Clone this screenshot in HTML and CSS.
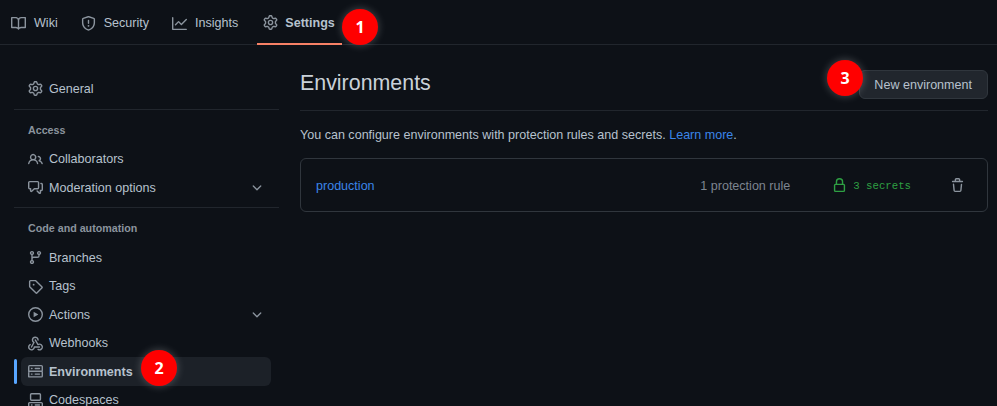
FILE: index.html
```html
<!DOCTYPE html>
<html lang="en">
<head>
<meta charset="utf-8">
<title>Environments</title>
<link rel="stylesheet" href="styles.css">
</head>
<body>
<svg class="defs" aria-hidden="true">
<symbol id="i-book" viewBox="0 0 16 16"><path d="M0 1.75A.75.75 0 0 1 .75 1h4.253c1.227 0 2.317.59 3 1.501A3.743 3.743 0 0 1 11.006 1h4.245a.75.75 0 0 1 .75.75v10.5a.75.75 0 0 1-.75.75h-4.507a2.25 2.25 0 0 0-1.591.659l-.622.621a.75.75 0 0 1-1.06 0l-.622-.621A2.25 2.25 0 0 0 5.258 13H.75a.75.75 0 0 1-.75-.75Zm7.251 10.324.004-5.073-.002-2.253A2.25 2.25 0 0 0 5.003 2.5H1.5v9h3.757a3.75 3.75 0 0 1 1.994.574ZM8.755 4.75l-.004 7.322a3.752 3.752 0 0 1 1.992-.572H14.5v-9h-3.495a2.25 2.25 0 0 0-2.25 2.25Z"/></symbol>
<symbol id="i-shield" viewBox="0 0 16 16"><path d="M7.467.133a1.748 1.748 0 0 1 1.066 0l5.25 1.68A1.75 1.75 0 0 1 15 3.48V7c0 1.566-.32 3.182-1.303 4.682-.983 1.498-2.585 2.813-5.032 3.855a1.697 1.697 0 0 1-1.33 0c-2.447-1.042-4.049-2.357-5.032-3.855C1.32 10.182 1 8.566 1 7V3.48a1.75 1.75 0 0 1 1.217-1.667Zm.61 1.429a.25.25 0 0 0-.153 0l-5.25 1.68a.25.25 0 0 0-.174.238V7c0 1.358.275 2.666 1.057 3.86.784 1.194 2.121 2.34 4.366 3.297a.196.196 0 0 0 .154 0c2.245-.956 3.582-2.104 4.366-3.298C13.225 9.666 13.5 8.36 13.5 7V3.48a.251.251 0 0 0-.174-.237l-5.25-1.68ZM8.75 4.75v3a.75.75 0 0 1-1.5 0v-3a.75.75 0 0 1 1.5 0ZM9 10.5a1 1 0 1 1-2 0 1 1 0 0 1 2 0Z"/></symbol>
<symbol id="i-graph" viewBox="0 0 16 16"><path d="M1.5 1.75V13.5h13.75a.75.75 0 0 1 0 1.5H.75a.75.75 0 0 1-.75-.75V1.75a.75.75 0 0 1 1.5 0Zm14.28 2.53-5.25 5.25a.75.75 0 0 1-1.06 0L7 7.06 4.28 9.78a.751.751 0 0 1-1.042-.018.751.751 0 0 1-.018-1.042l3.25-3.25a.75.75 0 0 1 1.06 0L10 7.94l4.72-4.72a.751.751 0 0 1 1.042.018.751.751 0 0 1 .018 1.042Z"/></symbol>
<symbol id="i-gear" viewBox="0 0 16 16"><path d="M8 0a8.2 8.2 0 0 1 .701.031C9.444.095 9.99.645 10.16 1.29l.288 1.107c.018.066.079.158.212.224.231.114.454.243.668.386.123.082.233.09.299.071l1.103-.303c.644-.176 1.392.021 1.82.63.27.385.506.792.704 1.218.315.675.111 1.422-.364 1.891l-.814.806c-.049.048-.098.147-.088.294.016.257.016.515 0 .772-.01.147.038.246.088.294l.814.806c.475.469.679 1.216.364 1.891a7.977 7.977 0 0 1-.704 1.217c-.428.61-1.176.807-1.82.63l-1.102-.302c-.067-.019-.177-.011-.3.071a5.909 5.909 0 0 1-.668.386c-.133.066-.194.158-.211.224l-.29 1.106c-.168.646-.715 1.196-1.458 1.26a8.006 8.006 0 0 1-1.402 0c-.743-.064-1.289-.614-1.458-1.26l-.289-1.106c-.018-.066-.079-.158-.212-.224a5.738 5.738 0 0 1-.668-.386c-.123-.082-.233-.09-.299-.071l-1.103.303c-.644.176-1.392-.021-1.82-.63a8.12 8.12 0 0 1-.704-1.218c-.315-.675-.111-1.422.363-1.891l.815-.806c.05-.048.098-.147.088-.294a6.214 6.214 0 0 1 0-.772c.01-.147-.038-.246-.088-.294l-.815-.806C.635 6.045.431 5.298.746 4.623a7.92 7.92 0 0 1 .704-1.217c.428-.61 1.176-.807 1.82-.63l1.102.302c.067.019.177.011.3-.071.214-.143.437-.272.668-.386.133-.066.194-.158.211-.224l.29-1.106C6.009.645 6.556.095 7.299.03 7.53.01 7.764 0 8 0Zm-.571 1.525c-.036.003-.108.036-.137.146l-.289 1.105c-.147.561-.549.967-.998 1.189-.173.086-.34.183-.5.29-.417.278-.97.423-1.529.27l-1.103-.303c-.109-.03-.175.016-.195.045-.22.312-.412.644-.573.99-.014.031-.021.11.059.19l.815.806c.411.406.562.957.53 1.456a4.709 4.709 0 0 0 0 .582c.032.499-.119 1.05-.53 1.456l-.815.806c-.081.08-.073.159-.059.19.162.346.353.677.573.989.02.03.085.076.195.046l1.102-.303c.56-.153 1.113-.008 1.53.27.161.107.328.204.501.29.447.222.85.629.997 1.189l.289 1.105c.029.109.101.143.137.146a6.6 6.6 0 0 0 1.142 0c.036-.003.108-.036.137-.146l.289-1.105c.147-.561.549-.967.998-1.189.173-.086.34-.183.5-.29.417-.278.97-.423 1.529-.27l1.103.303c.109.029.175-.016.195-.045.22-.313.411-.644.573-.99.014-.031.021-.11-.059-.19l-.815-.806c-.411-.406-.562-.957-.53-1.456a4.709 4.709 0 0 0 0-.582c-.032-.499.119-1.05.53-1.456l.815-.806c.081-.08.073-.159.059-.19a6.464 6.464 0 0 0-.573-.989c-.02-.03-.085-.076-.195-.046l-1.102.303c-.56.153-1.113.008-1.53-.27a4.44 4.44 0 0 0-.501-.29c-.447-.222-.85-.629-.997-1.189l-.289-1.105c-.029-.11-.101-.143-.137-.146a6.6 6.6 0 0 0-1.142 0ZM11 8a3 3 0 1 1-6 0 3 3 0 0 1 6 0ZM9.5 8a1.5 1.5 0 1 0-3.001.001A1.5 1.5 0 0 0 9.5 8Z"/></symbol>
<symbol id="i-people" viewBox="0 0 16 16"><path d="M2 5.5a3.5 3.5 0 1 1 5.898 2.549 5.508 5.508 0 0 1 3.034 4.084.75.75 0 1 1-1.482.235 4 4 0 0 0-7.9 0 .75.75 0 0 1-1.482-.236A5.507 5.507 0 0 1 3.102 8.05 3.493 3.493 0 0 1 2 5.5ZM11 4a3.001 3.001 0 0 1 2.22 5.018 5.01 5.01 0 0 1 2.56 3.012.749.749 0 0 1-.885.954.752.752 0 0 1-.549-.514 3.507 3.507 0 0 0-2.522-2.372.75.75 0 0 1-.574-.73v-.352a.75.75 0 0 1 .416-.672A1.5 1.5 0 0 0 11 5.5.75.75 0 0 1 11 4Zm-5.5-.5a2 2 0 1 0-.001 3.999A2 2 0 0 0 5.5 3.5Z"/></symbol>
<symbol id="i-discussion" viewBox="0 0 16 16"><path d="M1.75 1h8.5c.966 0 1.75.784 1.75 1.75v5.5A1.75 1.75 0 0 1 10.25 10H7.061l-2.574 2.573A1.458 1.458 0 0 1 2 11.543V10h-.25A1.75 1.75 0 0 1 0 8.25v-5.5C0 1.784.784 1 1.75 1ZM1.5 2.75v5.5c0 .138.112.25.25.25h1a.75.75 0 0 1 .75.75v2.19l2.72-2.72a.749.749 0 0 1 .53-.22h3.5a.25.25 0 0 0 .25-.25v-5.5a.25.25 0 0 0-.25-.25h-8.5a.25.25 0 0 0-.25.25Zm13 2a.25.25 0 0 0-.25-.25h-.5a.75.75 0 0 1 0-1.5h.5c.966 0 1.75.784 1.75 1.75v5.5A1.75 1.75 0 0 1 14.25 12H14v1.543a1.458 1.458 0 0 1-2.487 1.03L9.22 12.28a.749.749 0 0 1 .326-1.275.749.749 0 0 1 .734.215l2.22 2.22v-2.19a.75.75 0 0 1 .75-.75h1a.25.25 0 0 0 .25-.25Z"/></symbol>
<symbol id="i-branch" viewBox="0 0 16 16"><path d="M9.5 3.25a2.25 2.25 0 1 1 3 2.122V6A2.5 2.5 0 0 1 10 8.5H6a1 1 0 0 0-1 1v1.128a2.251 2.251 0 1 1-1.5 0V5.372a2.25 2.25 0 1 1 1.5 0v1.836A2.493 2.493 0 0 1 6 7h4a1 1 0 0 0 1-1v-.628A2.25 2.25 0 0 1 9.5 3.25Zm-6 0a.75.75 0 1 0 1.5 0 .75.75 0 0 0-1.5 0Zm8.25-.75a.75.75 0 1 0 0 1.5.75.75 0 0 0 0-1.5ZM4.25 12a.75.75 0 1 0 0 1.5.75.75 0 0 0 0-1.5Z"/></symbol>
<symbol id="i-tag" viewBox="0 0 16 16"><path d="M1 7.775V2.75C1 1.784 1.784 1 2.75 1h5.025c.464 0 .91.184 1.238.513l6.25 6.25a1.75 1.75 0 0 1 0 2.474l-5.026 5.026a1.75 1.75 0 0 1-2.474 0l-6.25-6.25A1.752 1.752 0 0 1 1 7.775Zm1.5 0c0 .066.026.13.073.177l6.25 6.25a.25.25 0 0 0 .354 0l5.025-5.025a.25.25 0 0 0 0-.354l-6.25-6.25a.25.25 0 0 0-.177-.073H2.75a.25.25 0 0 0-.25.25ZM6 5a1 1 0 1 1 0 2 1 1 0 0 1 0-2Z"/></symbol>
<symbol id="i-play" viewBox="0 0 16 16"><path d="M8 0a8 8 0 1 1 0 16A8 8 0 0 1 8 0ZM1.5 8a6.5 6.5 0 1 0 13 0 6.5 6.5 0 0 0-13 0Zm4.879-2.773 4.264 2.559a.25.25 0 0 1 0 .428l-4.264 2.559A.25.25 0 0 1 6 10.559V5.442a.25.25 0 0 1 .379-.215Z"/></symbol>
<symbol id="i-webhook" viewBox="0 0 16 16"><path d="M5.5 4.25a2.25 2.25 0 0 1 4.5 0 .75.75 0 0 0 1.5 0 3.75 3.75 0 1 0-6.14 2.889l-2.272 4.258a.75.75 0 0 0 1.324.706L7 7.25a.75.75 0 0 0-.309-1.015A2.25 2.25 0 0 1 5.5 4.25Z"/><path d="M7.364 3.607a.75.75 0 0 1 1.03.257l2.608 4.349a3.75 3.75 0 1 1-.628 6.785.75.75 0 0 1 .752-1.299 2.25 2.25 0 1 0-.033-3.88.75.75 0 0 1-1.03-.256L7.107 4.636a.75.75 0 0 1 .257-1.03Z"/><path d="M2.9 8.776A.75.75 0 0 1 2.625 9.8 2.25 2.25 0 1 0 6 11.75a.75.75 0 0 1 .75-.751h5.5a.75.75 0 0 1 0 1.5H7.425a3.751 3.751 0 1 1-5.55-3.998.75.75 0 0 1 1.024.274Z"/></symbol>
<symbol id="i-server" viewBox="0 0 16 16"><path d="M1.75 1h12.5c.966 0 1.75.784 1.75 1.75v4c0 .372-.116.717-.314 1 .198.283.314.628.314 1v4a1.75 1.75 0 0 1-1.75 1.75H1.75A1.75 1.75 0 0 1 0 13.75v-4c0-.372.116-.717.314-1a1.739 1.739 0 0 1-.314-1v-4C0 1.784.784 1 1.75 1ZM1.5 2.75v4c0 .138.112.25.25.25h12.5a.25.25 0 0 0 .25-.25v-4a.25.25 0 0 0-.25-.25H1.75a.25.25 0 0 0-.25.25Zm.25 5.75a.25.25 0 0 0-.25.25v4c0 .138.112.25.25.25h12.5a.25.25 0 0 0 .25-.25v-4a.25.25 0 0 0-.25-.25ZM7 4.75A.75.75 0 0 1 7.75 4h4.5a.75.75 0 0 1 0 1.5h-4.5A.75.75 0 0 1 7 4.75ZM7.75 10h4.5a.75.75 0 0 1 0 1.5h-4.5a.75.75 0 0 1 0-1.5ZM3 4.75A.75.75 0 0 1 3.75 4h.5a.75.75 0 0 1 0 1.5h-.5A.75.75 0 0 1 3 4.75ZM3.75 10h.5a.75.75 0 0 1 0 1.5h-.5a.75.75 0 0 1 0-1.5Z"/></symbol>
<symbol id="i-codespaces" viewBox="0 0 16 16"><path d="M0 11.25c0-.966.784-1.75 1.75-1.75h12.5c.966 0 1.75.784 1.75 1.75v3A1.75 1.75 0 0 1 14.25 16H1.75A1.75 1.75 0 0 1 0 14.25Zm2-9.5C2 .784 2.784 0 3.75 0h8.5C13.216 0 14 .784 14 1.75v5a1.75 1.75 0 0 1-1.75 1.75h-8.5A1.75 1.75 0 0 1 2 6.75Zm1.75-.25a.25.25 0 0 0-.25.25v5c0 .138.112.25.25.25h8.5a.25.25 0 0 0 .25-.25v-5a.25.25 0 0 0-.25-.25Zm-2 9.5a.25.25 0 0 0-.25.25v3c0 .138.112.25.25.25h12.5a.25.25 0 0 0 .25-.25v-3a.25.25 0 0 0-.25-.25Z"/><path d="M7 12.75a.75.75 0 0 1 .75-.75h4.5a.75.75 0 0 1 0 1.5h-4.5a.75.75 0 0 1-.75-.75Zm-4 0a.75.75 0 0 1 .75-.75h.5a.75.75 0 0 1 0 1.5h-.5a.75.75 0 0 1-.75-.75Z"/></symbol>
<symbol id="i-chevron" viewBox="0 0 16 16"><path d="M12.78 5.22a.749.749 0 0 1 0 1.06l-4.25 4.25a.749.749 0 0 1-1.06 0L3.22 6.28a.749.749 0 1 1 1.06-1.06L8 8.939l3.72-3.719a.749.749 0 0 1 1.06 0Z"/></symbol>
<symbol id="i-lock" viewBox="0 0 16 16"><path d="M4 4a4 4 0 0 1 8 0v2h.25c.966 0 1.75.784 1.75 1.75v5.5A1.75 1.75 0 0 1 12.25 15h-8.5A1.75 1.75 0 0 1 2 13.25v-5.5C2 6.784 2.784 6 3.75 6H4Zm8.25 3.5h-8.5a.25.25 0 0 0-.25.25v5.5c0 .138.112.25.25.25h8.5a.25.25 0 0 0 .25-.25v-5.5a.25.25 0 0 0-.25-.25ZM10.5 6V4a2.5 2.5 0 1 0-5 0v2Z"/></symbol>
<symbol id="i-trash" viewBox="0 0 16 16"><path d="M11 1.75V3h2.25a.75.75 0 0 1 0 1.5H2.75a.75.75 0 0 1 0-1.5H5V1.75C5 .784 5.784 0 6.75 0h2.5C10.216 0 11 .784 11 1.75ZM4.496 6.675l.66 6.6a.25.25 0 0 0 .249.225h5.19a.25.25 0 0 0 .249-.225l.66-6.6a.75.75 0 0 1 1.492.149l-.66 6.6A1.748 1.748 0 0 1 10.595 15h-5.19a1.75 1.75 0 0 1-1.741-1.575l-.66-6.6a.75.75 0 1 1 1.492-.15ZM6.5 1.75V3h3V1.75a.25.25 0 0 0-.25-.25h-2.5a.25.25 0 0 0-.25.25Z"/></symbol>
</svg>

<nav class="tabs">
  <a class="tab"><svg class="icon"><use href="#i-book"/></svg>Wiki</a>
  <a class="tab"><svg class="icon"><use href="#i-shield"/></svg>Security</a>
  <a class="tab"><svg class="icon"><use href="#i-graph"/></svg>Insights</a>
  <a class="tab tab-active"><svg class="icon"><use href="#i-gear"/></svg>Settings</a>
</nav>

<div class="layout">
  <aside class="sidebar">
    <a class="item"><svg class="icon"><use href="#i-gear"/></svg>General</a>
    <hr class="rule">
    <h3 class="group">Access</h3>
    <a class="item"><svg class="icon"><use href="#i-people"/></svg>Collaborators</a>
    <a class="item"><svg class="icon"><use href="#i-discussion"/></svg>Moderation options<svg class="chev"><use href="#i-chevron"/></svg></a>
    <hr class="rule">
    <h3 class="group">Code and automation</h3>
    <a class="item"><svg class="icon"><use href="#i-branch"/></svg>Branches</a>
    <a class="item"><svg class="icon"><use href="#i-tag"/></svg>Tags</a>
    <a class="item"><svg class="icon"><use href="#i-play"/></svg>Actions<svg class="chev"><use href="#i-chevron"/></svg></a>
    <a class="item"><svg class="icon"><use href="#i-webhook"/></svg>Webhooks</a>
    <a class="item item-active"><svg class="icon"><use href="#i-server"/></svg>Environments</a>
    <a class="item"><svg class="icon"><use href="#i-codespaces"/></svg>Codespaces</a>
  </aside>

  <main class="main">
    <header class="head">
      <h1 class="title">Environments</h1>
      <button class="btn" type="button">New environment</button>
    </header>
    <p class="intro">You can configure environments with protection rules and secrets. <a class="link">Learn more</a>.</p>
    <section class="card">
      <a class="env link">production</a>
      <span class="prot">1 protection rule</span>
      <span class="secrets"><svg class="icon"><use href="#i-lock"/></svg><code class="secret-text">3 secrets</code></span>
      <svg class="icon trash"><use href="#i-trash"/></svg>
    </section>
  </main>
</div>

<span class="badge badge-1">1</span>
<span class="badge badge-2">2</span>
<span class="badge badge-3">3</span>
</body>
</html>
```

FILE: styles.css
```css
html, body {
  margin: 0;
  height: 406px;
  overflow: hidden;
  background: #0d1117;
}
body {
  position: relative;
  color: #b7c2ce;
  font: 12.55px/20px "Liberation Sans", Arial, sans-serif;
}
.defs {
  display: none;
}
.icon {
  width: 15px;
  height: 15px;
  flex: none;
  fill: #8b949e;
}

.tabs {
  display: flex;
  gap: 9px;
  height: 44px;
  padding-left: 4px;
  border-bottom: 1px solid #21262d;
}
.tab {
  display: flex;
  align-items: center;
  gap: 8px;
  padding: 1px 7px 0;
  height: 45px;
  box-sizing: border-box;
}
.tab-active {
  font-weight: 700;
  gap: 7px;
  margin-left: 3px;
  padding: 2px 7px 0 6px;
  border-bottom: 2px solid #f78166;
}

.layout {
  display: flex;
  height: 361px;
  overflow: hidden;
}
.sidebar {
  width: 265px;
  margin-left: 14px;
  padding-top: 29px;
  flex: none;
}
.rule {
  height: 1px;
  border: 0;
  margin: 6px 0;
  background: #21262d;
}
.group {
  margin: 0;
  height: 28.75px;
  padding-left: 14px;
  font-size: 10.7px;
  line-height: 28px;
  font-weight: 700;
  color: #8b949e;
}
.item {
  position: relative;
  display: flex;
  align-items: center;
  gap: 6px;
  height: 28.5px;
  margin: 0 8px 0 7px;
  padding: 1px 8px 0 7px;
  box-sizing: border-box;
  border-radius: 6px;
}
.item-active {
  font-weight: 700;
  background: #1c2128;
}
.item-active::before {
  content: "";
  position: absolute;
  left: -7px;
  top: 2px;
  bottom: 2px;
  width: 3px;
  border-radius: 2px;
  background: #58a6ff;
}
.chev {
  width: 14px;
  height: 14px;
  margin-left: auto;
  margin-right: -1px;
  fill: #8b949e;
}

.main {
  width: 688px;
  margin-left: 21px;
  flex: none;
}
.head {
  display: flex;
  align-items: center;
  justify-content: space-between;
  padding: 25px 0 11px;
  border-bottom: 1px solid #21262d;
}
.title {
  margin: 0 0 3px;
  font-size: 21.4px;
  line-height: 26px;
  font-weight: 400;
  color: #c9d1d9;
}
.btn {
  height: 29px;
  padding: 0 15px 0 14px;
  border: 1px solid #30363d;
  border-radius: 6px;
  background: #21262d;
  color: #b7c2ce;
  font: inherit;
}
.intro {
  margin: 14px 0 13px;
}
.link {
  color: #3b85e8;
}
.card {
  display: flex;
  align-items: center;
  height: 54px;
  box-sizing: border-box;
  padding: 1px 22px 0 15px;
  border: 1px solid #30363d;
  border-radius: 6px;
}
.env {
  flex: 1;
}
.prot {
  color: #7d8590;
  margin-right: 42px;
}
.secrets {
  display: flex;
  align-items: center;
  gap: 6px;
  margin-right: 39px;
}
.secrets .icon {
  fill: #2ea043;
}
.secret-text {
  font: 10.7px/16px "Liberation Mono", "Courier New", monospace;
  color: #2ea043;
}

.badge {
  position: absolute;
  width: 36px;
  height: 36px;
  border-radius: 50%;
  background: #f00;
  color: #fff;
  text-align: center;
  font: 700 16px/36px "Open Sans", sans-serif;
  box-shadow: 0 0 8px rgba(255, 255, 255, 0.25);
}
.badge-1 { left: 342px; top: 9px; }
.badge-2 { left: 141px; top: 350px; }
.badge-3 { left: 827px; top: 60px; }
```
